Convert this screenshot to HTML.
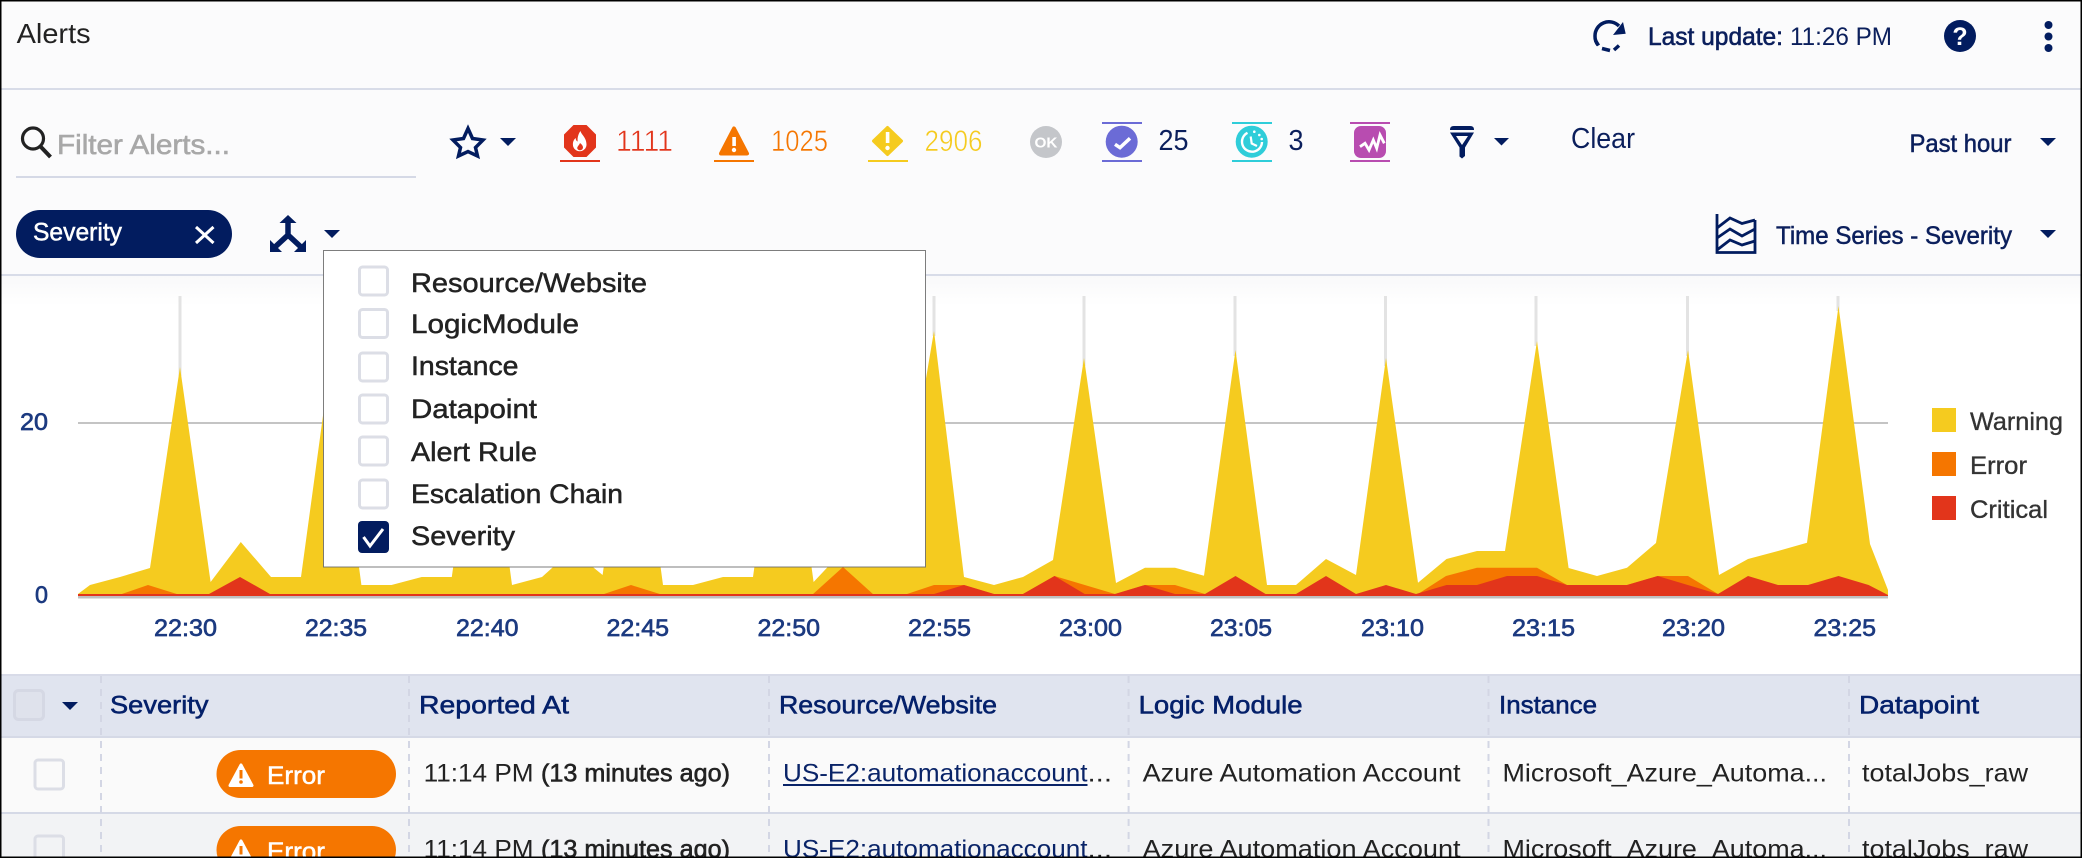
<!DOCTYPE html>
<html lang="en"><head><meta charset="utf-8"><title>Alerts</title>
<style>
html,body{margin:0;padding:0;background:#fff;width:2082px;height:858px;overflow:hidden}
svg{display:block;position:absolute;left:0;top:0}
text{font-family:"Liberation Sans",sans-serif;white-space:pre}
.m{stroke-width:.5px}
.lt{stroke:#fbfbfc;stroke-width:.55px;font-size:30px}
.dd{font-size:27px;fill:#222;stroke:#222;stroke-width:.5px}
.nv{font-size:25px;fill:#04206a;stroke:#04206a;stroke-width:.55px}
.xl{font-size:24px;fill:#1c3a80;stroke:#1c3a80;stroke-width:.65px}
.lg{font-size:25px;fill:#333;stroke:#333;stroke-width:.35px}
.rw{font-size:25px;fill:#222}
.cb{fill:none;stroke:#dcdee6;stroke-width:3}
</style></head><body>
<svg width="2082" height="858" viewBox="0 0 2082 858" xmlns="http://www.w3.org/2000/svg">
<defs><linearGradient id="g" x1="0" y1="0" x2="0" y2="1"><stop offset="0" stop-color="#f9f9fa"/><stop offset="1" stop-color="#fff"/></linearGradient></defs>
<rect width="2082" height="858" fill="#fff"/>
<rect width="2082" height="275" fill="#fbfbfc"/>
<rect y="276" width="2082" height="30" fill="url(#g)"/>
<rect y="88" width="2082" height="2" fill="#d8dce8"/>
<rect y="274" width="2082" height="2" fill="#d8dce8"/>

<!-- header -->
<text x="16.6" y="43" font-size="28" fill="#222" textLength="74" lengthAdjust="spacingAndGlyphs">Alerts</text>
<path d="M1598 45A14 14 0 0 1 1595 36A14 14 0 0 1 1619 26" fill="none" stroke="#021c5f" stroke-width="3.5"/>
<path d="M1595.500 40.500L1598.500 45.500M1602 48.500L1610 50.500M1614 50L1619 45.500" fill="none" stroke="#021c5f" stroke-width="3.500"/>
<polygon points="1623,22 1625.700,33.700 1613,35" fill="#021c5f"/>
<text x="1648" y="45" font-size="25" fill="#0b1f5c" stroke="#0b1f5c" stroke-width=".6" textLength="135" lengthAdjust="spacingAndGlyphs">Last update:</text>
<text x="1790" y="45" font-size="25" fill="#0b1f5c" textLength="102" lengthAdjust="spacingAndGlyphs">11:26 PM</text>
<circle cx="1960" cy="36" r="16" fill="#021c5f"/>
<text x="1960" y="45" font-size="25" font-weight="700" fill="#fff" text-anchor="middle">?</text>
<circle cx="2048.500" cy="25" r="4" fill="#021c5f"/><circle cx="2048.500" cy="36.500" r="4" fill="#021c5f"/><circle cx="2048.500" cy="48" r="4" fill="#021c5f"/>

<!-- filter row -->
<circle cx="33" cy="138.500" r="10.500" fill="none" stroke="#222" stroke-width="3.200"/>
<path d="M40.500 146.500L50.500 157" stroke="#222" stroke-width="4" fill="none"/>
<text x="57" y="154" font-size="28" fill="#a8a8a8" stroke="#a8a8a8" stroke-width=".6" textLength="173" lengthAdjust="spacingAndGlyphs">Filter Alerts...</text>
<rect x="16" y="176" width="400" height="2" fill="#d5d9e6"/>

<polygon points="468,128.500 472.500,138.500 483,140 475.500,147.500 477.500,156 468,151.500 458.500,156 460.500,147.500 453,140 463.500,138.500" fill="none" stroke="#021c5f" stroke-width="3.500"/>
<polygon points="500,138 516,138 508,146" fill="#021c5f"/>

<polygon points="573.500,125 586.500,125 596,134.500 596,147.500 586.500,157 573.500,157 564,147.500 564,134.500" fill="#e2351b"/>
<path d="M580.500 131c1 4 6 6.500 6 13.500a6.800 6.800 0 0 1-13.600 0c0-3 1-5 2.800-6.500c0 2 .8 3.200 2 3.500c-.5-3.500.5-7.500 2.800-10.500z" fill="#fff"/>
<path d="M580 143c2 1.500 3 3 3 4.500a3 3 0 0 1-5.800.8c0-2 2-3 2.800-5.300z" fill="#e2351b"/>
<rect x="560" y="160" width="40" height="2" fill="#e2351b"/>
<text x="616" y="151" class="lt" fill="#e2351b" textLength="57" lengthAdjust="spacingAndGlyphs">1111</text>

<path d="M734 128.500L747 153.500H721Z" fill="#f57600" stroke="#f57600" stroke-width="4" stroke-linejoin="round"/>
<rect x="732.300" y="137" width="3.600" height="9" fill="#fff"/><circle cx="734" cy="150" r="2.200" fill="#fff"/>
<rect x="714" y="160" width="40" height="2" fill="#f57600"/>
<text x="771" y="151" class="lt" fill="#f57600" textLength="57" lengthAdjust="spacingAndGlyphs">1025</text>

<path d="M887.500 127.500L901.500 141L887.500 154.500L873.500 141Z" fill="#f5cb1f" stroke="#f5cb1f" stroke-width="3" stroke-linejoin="round"/>
<rect x="885.800" y="132" width="3.600" height="11" fill="#fff"/><circle cx="887.500" cy="148" r="2.200" fill="#fff"/>
<rect x="868" y="160" width="40" height="2" fill="#f5cb1f"/>
<text x="924.500" y="151" class="lt" fill="#f5cb1f" textLength="58" lengthAdjust="spacingAndGlyphs">2906</text>

<circle cx="1046" cy="142" r="16" fill="#c4c6ca"/>
<text x="1046" y="147.500" font-size="15" font-weight="700" fill="#fff" text-anchor="middle" textLength="23" lengthAdjust="spacingAndGlyphs">OK</text>

<rect x="1102" y="122" width="40" height="2" fill="#6b6bd6"/><rect x="1102" y="160" width="40" height="2" fill="#6b6bd6"/>
<circle cx="1121.700" cy="141.700" r="16" fill="#6b6bd6"/>
<path d="M1115 144.300L1120 147.700L1130 138.300" fill="none" stroke="#fff" stroke-width="3.500"/>
<text x="1158.500" y="150" font-size="29" fill="#0b1f5c" textLength="30" lengthAdjust="spacingAndGlyphs">25</text>

<rect x="1232" y="122" width="40" height="2" fill="#2fcdd9"/><rect x="1232" y="160" width="40" height="2" fill="#2fcdd9"/>
<circle cx="1251.700" cy="141.700" r="16" fill="#2fcdd9"/>
<path d="M1247.500 132.800A10 10 0 1 0 1262 142" fill="none" stroke="#fff" stroke-width="2.400"/>
<path d="M1250.700 136.500L1251.700 143.500L1257 146" fill="none" stroke="#fff" stroke-width="2.200"/>
<circle cx="1254.300" cy="131.700" r="1.300" fill="#fff"/><circle cx="1259.300" cy="135" r="1.300" fill="#fff"/><circle cx="1261.700" cy="139" r="1.300" fill="#fff"/>
<text x="1288.500" y="150" font-size="29" fill="#0b1f5c" textLength="15" lengthAdjust="spacingAndGlyphs">3</text>

<rect x="1350" y="122" width="40" height="2" fill="#b84cb0"/><rect x="1350" y="160" width="40" height="2" fill="#b84cb0"/>
<rect x="1354" y="126" width="32" height="32" rx="7" fill="#b84cb0"/>
<polyline points="1360,146.700 1365,143.300 1369,150 1373.300,140 1376.700,148.300 1380,135 1384.300,143.300" fill="none" stroke="#fff" stroke-width="2.800"/>

<path d="M1450 130V129.500Q1450 126 1454 126H1470Q1474 126 1474 129.500V130Z" fill="#021c5f"/>
<path fill-rule="evenodd" d="M1450 132.500H1474L1465 147.500V156L1462 158.500L1459.500 156.500V147.500ZM1456 136L1468 136L1462 145Z" fill="#021c5f"/>
<polygon points="1494,138 1509,138 1501.500,145.500" fill="#021c5f"/>
<text x="1571" y="148" font-size="29" fill="#0b1f5c" textLength="64" lengthAdjust="spacingAndGlyphs">Clear</text>
<text x="1909.500" y="152" font-size="25" fill="#0b1f5c" stroke="#0b1f5c" class="m" textLength="102" lengthAdjust="spacingAndGlyphs">Past hour</text>
<polygon points="2040,138 2056,138 2048,146" fill="#021c5f"/>

<!-- second row -->
<rect x="16" y="210" width="216" height="48" rx="24" fill="#021c5f"/>
<text x="33" y="240.500" font-size="25" fill="#fff" stroke="#fff" class="m" textLength="89" lengthAdjust="spacingAndGlyphs">Severity</text>
<path d="M196 227L213.500 243M213.500 227L196 243" stroke="#fff" stroke-width="3" fill="none"/>

<polygon points="288,215 279.500,223 296.500,223" fill="#021c5f"/>
<path d="M288 221V235L274.500 247.500M288 235L301.500 247.500" fill="none" stroke="#021c5f" stroke-width="5.500"/>
<polygon points="270,240 270,252 282,252" fill="#021c5f"/><polygon points="306,240 306,252 294,252" fill="#021c5f"/>
<polygon points="324,230 340,230 332,238" fill="#021c5f"/>

<g fill="none" stroke="#021c5f" stroke-width="2.800">
<path d="M1717 214V252.500H1755V220"/>
<path d="M1717 228L1730 218L1742 223.500L1755 220"/>
<path d="M1717 238L1730 229L1742 236L1755 229"/>
<path d="M1717 250L1730 240L1742 245L1755 241"/>
</g>
<text x="1776" y="244" font-size="25" fill="#0b1f5c" stroke="#0b1f5c" class="m" textLength="236" lengthAdjust="spacingAndGlyphs">Time Series - Severity</text>
<polygon points="2040,230 2056,230 2048,238" fill="#021c5f"/>

<!-- chart -->
<g fill="#e3e3e3">
<rect x="178.500" y="296" width="3" height="80"/><rect x="932.500" y="296" width="3" height="40"/><rect x="1082.500" y="296" width="3" height="70"/><rect x="1233.500" y="296" width="3" height="60"/><rect x="1384" y="296" width="3" height="70"/><rect x="1534.500" y="296" width="3" height="50"/><rect x="1686" y="296" width="3" height="60"/><rect x="1836.500" y="296" width="3" height="15"/>
</g>
<rect x="78" y="422" width="1810" height="2" fill="#c4c4c4"/>
<polygon fill="#f5cb1f" points="78,594 90,585 120,577 150,568 180,367 210.600,582 240.800,542 271,577 301,577 331,357 361.400,585 391.500,585 421.700,577 451.800,577 482,360 512,585 542,577 572,550 602.600,575 632.800,360 663,585 693,585 723,577 753,577 783,360 813.600,582 843.700,550 874,550 904,509 934,331 964,577 994,585 1023,577 1053,560 1084,358 1116,583 1145,567.700 1175,567.700 1204,575.700 1235.500,350 1267,585 1296,585 1326,559 1356,575 1386,358 1418,582.700 1446.500,559 1477,551 1505,551 1537,341 1568.600,568 1597,576 1627,567.700 1656,543 1688,350 1719,575 1748,559 1778,551 1807,542.700 1838.500,306 1870,544 1888,590 1888,596 78,596"/>
<polygon fill="#f57600" points="119,595 148,585 180,595 601,595 631,585 663,595 812,595 843,567 874,595 904,595 934,585 964,585 994,594 1023,594 1054.500,576 1115,594 1145,585 1175,585 1205,594 1418,594 1446,576 1477,567.700 1537,567.700 1567,585 1627,585 1658,576 1688,576 1718,594 1718,596 119,596"/>
<polygon fill="#e2351b" points="78,594 209,594 240,577 270,594 934,594 964,585 994,594 1023,594 1054.500,576 1084.700,594 1115,594 1145,585 1175,594 1205,594 1235.500,576 1265.600,594 1296,594 1326,576 1356,594 1386,585 1416,594 1446.500,585 1477,585 1507,576 1537,576 1567,585 1627,585 1657.600,576 1718,594 1748,576 1778,585 1808,585 1838.500,576 1868.600,585 1888,595 1888,596 78,596"/>
<rect x="78" y="596" width="1810" height="2.500" fill="#c0c0c0"/>

<text x="20" y="430" class="xl" textLength="28" lengthAdjust="spacingAndGlyphs">20</text>
<text x="35" y="603" class="xl" textLength="13" lengthAdjust="spacingAndGlyphs">0</text>
<text x="154" y="636" class="xl" textLength="63" lengthAdjust="spacingAndGlyphs">22:30</text>
<text x="305" y="636" class="xl" textLength="62" lengthAdjust="spacingAndGlyphs">22:35</text>
<text x="456" y="636" class="xl" textLength="62.500" lengthAdjust="spacingAndGlyphs">22:40</text>
<text x="606.500" y="636" class="xl" textLength="62.500" lengthAdjust="spacingAndGlyphs">22:45</text>
<text x="757.500" y="636" class="xl" textLength="62.500" lengthAdjust="spacingAndGlyphs">22:50</text>
<text x="908" y="636" class="xl" textLength="63" lengthAdjust="spacingAndGlyphs">22:55</text>
<text x="1059" y="636" class="xl" textLength="63" lengthAdjust="spacingAndGlyphs">23:00</text>
<text x="1210" y="636" class="xl" textLength="62" lengthAdjust="spacingAndGlyphs">23:05</text>
<text x="1361" y="636" class="xl" textLength="63" lengthAdjust="spacingAndGlyphs">23:10</text>
<text x="1512" y="636" class="xl" textLength="63" lengthAdjust="spacingAndGlyphs">23:15</text>
<text x="1662" y="636" class="xl" textLength="63" lengthAdjust="spacingAndGlyphs">23:20</text>
<text x="1813.500" y="636" class="xl" textLength="62.500" lengthAdjust="spacingAndGlyphs">23:25</text>

<rect x="1932" y="408" width="24" height="24" fill="#f5cb1f"/><rect x="1932" y="452" width="24" height="24" fill="#f57600"/><rect x="1932" y="496" width="24" height="24" fill="#e2351b"/>
<text x="1970" y="430" class="lg" textLength="93" lengthAdjust="spacingAndGlyphs">Warning</text>
<text x="1970" y="474" class="lg" textLength="57" lengthAdjust="spacingAndGlyphs">Error</text>
<text x="1970" y="518" class="lg" textLength="78" lengthAdjust="spacingAndGlyphs">Critical</text>

<!-- dropdown -->
<rect x="323.500" y="250.500" width="602" height="316.500" fill="#fff" stroke="#666" stroke-opacity=".85"/>
<rect x="359.500" y="267" width="28" height="28" rx="3" class="cb"/>
<rect x="359.500" y="309.500" width="28" height="28" rx="3" class="cb"/>
<rect x="359.500" y="353" width="28" height="28" rx="3" class="cb"/>
<rect x="359.500" y="395" width="28" height="28" rx="3" class="cb"/>
<rect x="359.500" y="437" width="28" height="28" rx="3" class="cb"/>
<rect x="359.500" y="480" width="28" height="28" rx="3" class="cb"/>
<rect x="358" y="521" width="31" height="32" rx="4" fill="#021c5f"/>
<path d="M363.500 537L370 546L383 529" fill="none" stroke="#fff" stroke-width="3"/>
<text x="411" y="292" class="dd" textLength="236" lengthAdjust="spacingAndGlyphs">Resource/Website</text>
<text x="411" y="333" class="dd" textLength="168" lengthAdjust="spacingAndGlyphs">LogicModule</text>
<text x="411" y="375" class="dd" textLength="107.500" lengthAdjust="spacingAndGlyphs">Instance</text>
<text x="411" y="418" class="dd" textLength="126" lengthAdjust="spacingAndGlyphs">Datapoint</text>
<text x="411" y="461" class="dd" textLength="126" lengthAdjust="spacingAndGlyphs">Alert Rule</text>
<text x="411" y="503" class="dd" textLength="212" lengthAdjust="spacingAndGlyphs">Escalation Chain</text>
<text x="411" y="545" class="dd" textLength="104" lengthAdjust="spacingAndGlyphs">Severity</text>

<!-- table -->
<rect y="676" width="2082" height="60" fill="#e0e4ef"/>
<rect y="674" width="2082" height="2" fill="#d8dbe8"/>
<rect y="738" width="2082" height="74" fill="#fafafa"/>
<rect y="736" width="2082" height="2" fill="#d5d9e6"/>
<rect y="814" width="2082" height="44" fill="#f2f3f5"/>
<rect y="812" width="2082" height="2" fill="#d5d9e6"/>
<g stroke="#d3d6e4" stroke-width="2" stroke-dasharray="7 6">
<path d="M101 676V858M409 676V858M769 676V858M1128.600 676V858M1488.500 676V858M1849 676V858"/>
</g>
<rect x="14.500" y="690.500" width="29" height="29" rx="4" fill="#dfe2ec" stroke="#d5d8e4" stroke-width="3"/>
<polygon points="62,702 78,702 70,710" fill="#021c5f"/>
<text x="110" y="713.500" class="nv" textLength="98.500" lengthAdjust="spacingAndGlyphs">Severity</text>
<text x="419" y="713.500" class="nv" textLength="150" lengthAdjust="spacingAndGlyphs">Reported At</text>
<text x="779" y="713.500" class="nv" textLength="218" lengthAdjust="spacingAndGlyphs">Resource/Website</text>
<text x="1138.600" y="713.500" class="nv" textLength="164" lengthAdjust="spacingAndGlyphs">Logic Module</text>
<text x="1499" y="713.500" class="nv" textLength="98" lengthAdjust="spacingAndGlyphs">Instance</text>
<text x="1859" y="713.500" class="nv" textLength="120" lengthAdjust="spacingAndGlyphs">Datapoint</text>

<!-- row 1 -->
<rect x="35" y="760" width="28.500" height="29" rx="3" class="cb"/>
<rect x="216.500" y="750" width="179.500" height="48" rx="24" fill="#f57600"/>
<path d="M241 765L252 785.500H230Z" fill="#fff" stroke="#fff" stroke-width="3" stroke-linejoin="round"/>
<rect x="239.500" y="770" width="3" height="8.500" fill="#f57600"/><circle cx="241" cy="782" r="1.800" fill="#f57600"/>
<text x="267" y="784" font-size="25" fill="#fff" stroke="#fff" class="m" textLength="58" lengthAdjust="spacingAndGlyphs">Error</text>
<text x="423.600" y="781.500" class="rw" textLength="110" lengthAdjust="spacingAndGlyphs">11:14 PM</text>
<text x="541" y="781.500" class="rw" stroke="#222" stroke-width=".6" textLength="189" lengthAdjust="spacingAndGlyphs">(13 minutes ago)</text>
<text x="783" y="781.500" font-size="25" fill="#0a2468" textLength="304.500" lengthAdjust="spacingAndGlyphs">US-E2:automationaccount</text>
<rect x="783" y="784" width="304.500" height="2" fill="#0a2468"/>
<text x="1087.500" y="781.500" class="rw" textLength="24.500" lengthAdjust="spacingAndGlyphs">...</text>
<text x="1142.600" y="781.500" class="rw" textLength="318" lengthAdjust="spacingAndGlyphs">Azure Automation Account</text>
<text x="1502.500" y="781.500" class="rw" textLength="324.500" lengthAdjust="spacingAndGlyphs">Microsoft_Azure_Automa...</text>
<text x="1862" y="781.500" class="rw" textLength="166" lengthAdjust="spacingAndGlyphs">totalJobs_raw</text>

<!-- row 2 -->
<rect x="35" y="836" width="28.500" height="29" rx="3" class="cb"/>
<rect x="216.500" y="826" width="179.500" height="48" rx="24" fill="#f57600"/>
<path d="M241 841L252 861.500H230Z" fill="#fff" stroke="#fff" stroke-width="3" stroke-linejoin="round"/>
<rect x="239.500" y="846" width="3" height="8.500" fill="#f57600"/>
<text x="267" y="860" font-size="25" fill="#fff" stroke="#fff" class="m" textLength="58" lengthAdjust="spacingAndGlyphs">Error</text>
<text x="423.600" y="857.500" class="rw" textLength="110" lengthAdjust="spacingAndGlyphs">11:14 PM</text>
<text x="541" y="857.500" class="rw" stroke="#222" stroke-width=".6" textLength="189" lengthAdjust="spacingAndGlyphs">(13 minutes ago)</text>
<text x="783" y="857.500" font-size="25" fill="#0a2468" textLength="304.500" lengthAdjust="spacingAndGlyphs">US-E2:automationaccount</text>
<text x="1087.500" y="857.500" class="rw" textLength="24.500" lengthAdjust="spacingAndGlyphs">...</text>
<text x="1142.600" y="857.500" class="rw" textLength="318" lengthAdjust="spacingAndGlyphs">Azure Automation Account</text>
<text x="1502.500" y="857.500" class="rw" textLength="324.500" lengthAdjust="spacingAndGlyphs">Microsoft_Azure_Automa...</text>
<text x="1862" y="857.500" class="rw" textLength="166" lengthAdjust="spacingAndGlyphs">totalJobs_raw</text>

<rect x=".75" y=".75" width="2080.500" height="856.500" fill="none" stroke="#000" stroke-width="1.500"/>
</svg>
</body></html>
